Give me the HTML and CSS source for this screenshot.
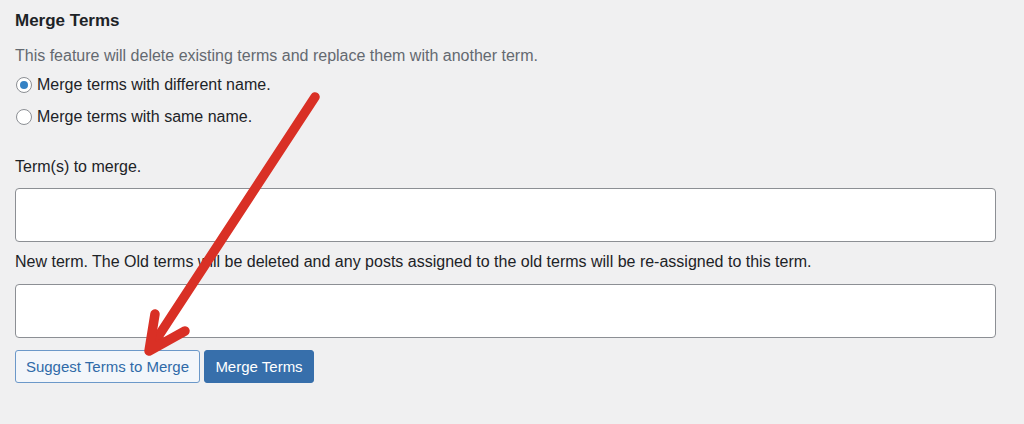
FILE: index.html
```html
<!DOCTYPE html>
<html>
<head>
<meta charset="utf-8">
<link rel="stylesheet" href="styles.css">
</head>
<body>
<div class="page">
  <h2 class="title">Merge Terms</h2>
  <p class="desc">This feature will delete existing terms and replace them with another term.</p>
  <label class="radio-row r1"><span class="radio checked"></span>Merge terms with different name.</label>
  <label class="radio-row r2"><span class="radio"></span>Merge terms with same name.</label>
  <div class="label l1">Term(s) to merge.</div>
  <div class="field f1"></div>
  <div class="label l2">New term. The Old terms will be deleted and any posts assigned to the old terms will be re-assigned to this term.</div>
  <div class="field f2"></div>
  <div class="buttons">
    <button class="btn secondary">Suggest Terms to Merge</button>
    <button class="btn primary">Merge Terms</button>
  </div>
  <svg class="arrow" width="1024" height="424" viewBox="0 0 1024 424">
    <path d="M315 97 L150 349" stroke="#d93025" stroke-width="9.5" stroke-linecap="round" fill="none"/>
    <path d="M155 314 L149 351 L185 331" stroke="#d93025" stroke-width="9.5" stroke-linecap="round" stroke-linejoin="round" fill="none"/>
  </svg>
</div>
</body>
</html>
```
FILE: styles.css
```css
html, body {
  margin: 0;
  padding: 0;
  background: #f0f0f1;
}
.page {
  position: relative;
  width: 1024px;
  height: 424px;
  box-sizing: border-box;
  padding-left: 15px;
  display: flex;
  flex-direction: column;
  font-family: "Liberation Sans", Arial, sans-serif;
  color: #1d2327;
  font-size: 16px;
  overflow: hidden;
}
.title {
  margin: 11px 0 0;
  height: 20px;
  line-height: 20px;
  font-size: 17px;
  font-weight: bold;
}
.desc {
  margin: 15px 0 0;
  height: 20px;
  line-height: 20px;
  color: #646970;
  font-size: 16px;
}
.radio-row {
  display: flex;
  align-items: center;
  height: 20px;
  line-height: 20px;
}
.r1 { margin-top: 9px; }
.r2 { margin-top: 12px; }
.radio {
  width: 14px;
  height: 14px;
  border: 1px solid #8c8f94;
  border-radius: 50%;
  background: #fff;
  margin: 0 5px 0 1px;
  display: flex;
  align-items: center;
  justify-content: center;
}
.radio.checked::after {
  content: "";
  width: 8px;
  height: 8px;
  border-radius: 50%;
  background: #3582c4;
}
.label {
  height: 20px;
  line-height: 20px;
}
.l1 { margin-top: 30px; }
.l2 { margin-top: 10px; }
.field {
  width: 981px;
  height: 54px;
  box-sizing: border-box;
  background: #fff;
  border: 1px solid #8c8f94;
  border-radius: 4px;
}
.f1 { margin-top: 11px; }
.f2 { margin-top: 12px; }
.buttons {
  margin-top: 12px;
  display: flex;
  gap: 4px;
}
.btn {
  height: 33px;
  box-sizing: border-box;
  border-radius: 3px;
  font-family: "Liberation Sans", Arial, sans-serif;
  font-size: 15px;
  padding: 0 8px;
  cursor: pointer;
}
.secondary {
  width: 185px;
  background: #f3f6fa;
  color: #2f6aa8;
  border: 1px solid #6b98c9;
}
.primary {
  width: 110px;
  background: #376fab;
  color: #fff;
  border: 1px solid #376fab;
}
.arrow {
  position: absolute;
  left: 0;
  top: 0;
  pointer-events: none;
}
```
